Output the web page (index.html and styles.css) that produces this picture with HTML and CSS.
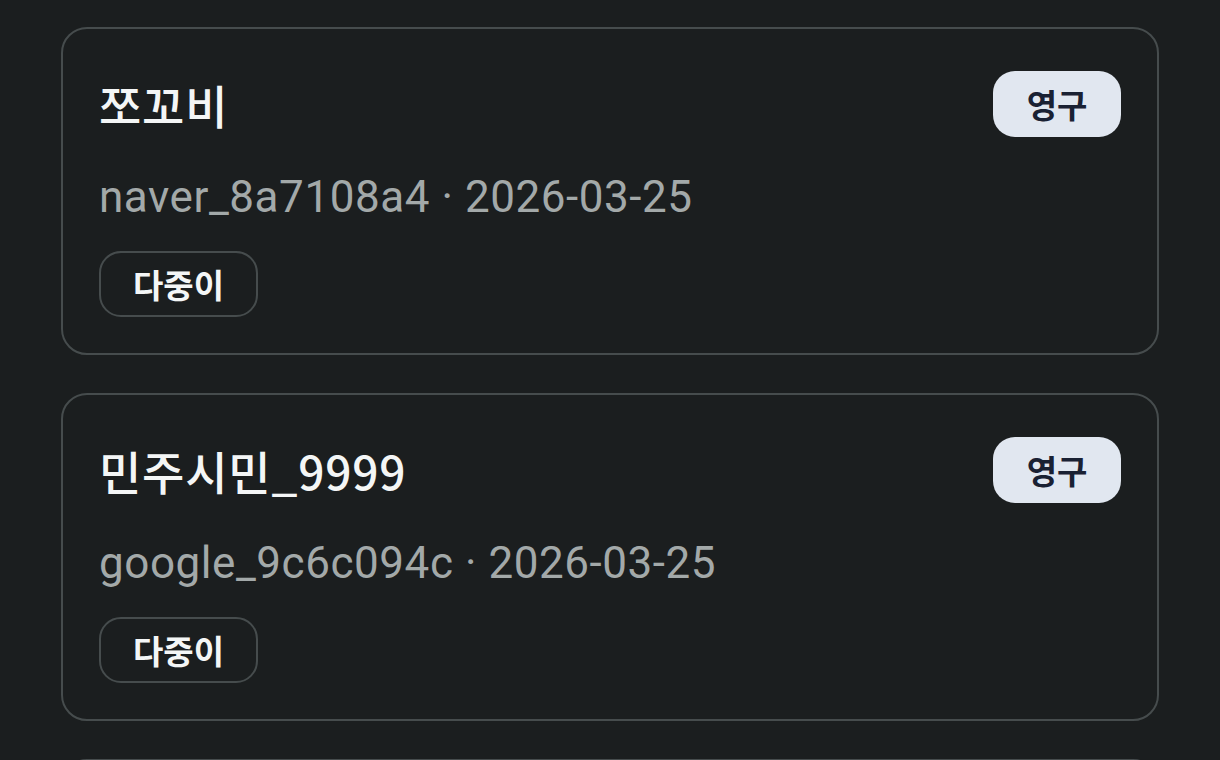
FILE: index.html
```html
<!DOCTYPE html>
<html lang="ko">
<head>
  <meta charset="UTF-8">
  <meta name="viewport" content="width=device-width, initial-scale=1.0">
  <title>유저 목록</title>
  <link rel="stylesheet" href="styles.css">
</head>
<body>
  <main class="user-list">
    <div class="card">
      <div class="card-head">
        <h2 class="name">쪼꼬비</h2>
        <span class="badge">영구</span>
      </div>
      <p class="meta">naver_8a7108a4 · 2026-03-25</p>
      <div class="tags">
        <span class="tag">다중이</span>
      </div>
    </div>

    <div class="card">
      <div class="card-head">
        <h2 class="name">민주시민_9999</h2>
        <span class="badge">영구</span>
      </div>
      <p class="meta">google_9c6c094c · 2026-03-25</p>
      <div class="tags">
        <span class="tag">다중이</span>
      </div>
    </div>

    <!-- next card, only its top edge shows -->
    <div class="card card-empty"></div>
  </main>
</body>
</html>
```

FILE: styles.css
```css
body, html {
  margin: 0;
  padding: 0;
  background-color: #1b1e1f;
  font-family: Roboto, "Noto Sans CJK KR", sans-serif;
  color: #f4f6f6;
}

.user-list {
  display: flex;
  flex-direction: column;
  gap: 38px;
  padding: 27px 61px;
}

.card {
  border: 2px solid #464c4d;
  border-radius: 26px;
  padding: 42px 36px 36px;
}

.card-empty {
  height: 260px;
}

.card-head {
  display: flex;
  align-items: center;
  justify-content: space-between;
}

.name {
  margin: 0;
  font-family: "Noto Sans CJK KR", sans-serif;
  font-size: 46px;
  font-weight: 500;
  letter-spacing: 0.8px;
  line-height: 66px;
}

.badge {
  display: inline-flex;
  align-items: center;
  justify-content: center;
  width: 128px;
  height: 66px;
  border-radius: 22px;
  background-color: #e1e7f0;
  color: #1a2133;
  font-family: "Noto Sans CJK KR", sans-serif;
  font-size: 33px;
  font-weight: 700;
}

.meta {
  margin: 30px 0 0;
  font-size: 44px;
  letter-spacing: 0.55px;
  line-height: 60px;
  color: #a3a9a9;
}

.tags {
  display: flex;
  gap: 12px;
  margin-top: 24px;
}

.tag {
  display: inline-flex;
  align-items: center;
  justify-content: center;
  height: 62px;
  padding: 0 32px;
  border: 2px solid #464c4d;
  border-radius: 22px;
  font-family: "Noto Sans CJK KR", sans-serif;
  font-size: 33px;
  font-weight: 700;
}
```
